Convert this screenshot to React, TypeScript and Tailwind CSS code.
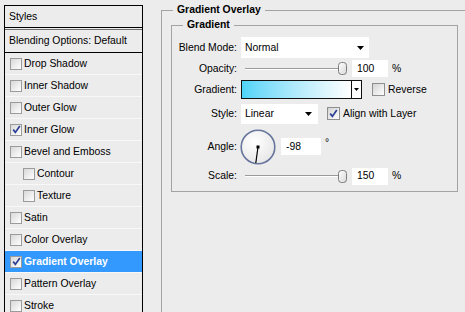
import React from "react";

type StyleItem = {
	name: string;
	checked?: boolean;
	indent?: boolean;
	active?: boolean;
};

const styleItems: StyleItem[] = [
	{ name: "Drop Shadow" },
	{ name: "Inner Shadow" },
	{ name: "Outer Glow" },
	{ name: "Inner Glow", checked: true },
	{ name: "Bevel and Emboss" },
	{ name: "Contour", indent: true },
	{ name: "Texture", indent: true },
	{ name: "Satin" },
	{ name: "Color Overlay" },
	{ name: "Gradient Overlay", checked: true, active: true },
	{ name: "Pattern Overlay" },
	{ name: "Stroke" },
];

function CheckBox({ checked = false, small = false }: { checked?: boolean; small?: boolean }) {
	return (
		<span
			className={
				small
					? "flex h-[12px] w-[12px] shrink-0 items-center justify-center border border-[#9a9b9b] bg-linear-to-br from-[#d8d8d8] to-white"
					: "flex h-[13px] w-[13px] shrink-0 items-center justify-center border border-[#8e8f8f] bg-linear-to-br from-[#d4d4d4] to-white"
			}
		>
			{checked && (
				<svg width="9" height="9" viewBox="0 0 9 9">
					<path d="M1.2 4.6 L3.4 7.4 L7.8 1" fill="none" stroke="#2c3f96" strokeWidth="1.7" />
				</svg>
			)}
		</span>
	);
}

function Arrow() {
	return (
		<svg width="7" height="4" viewBox="0 0 7 4" className="shrink-0">
			<path d="M0 0h7L3.5 4z" fill="#000" />
		</svg>
	);
}

function Slider() {
	return (
		<div className="ml-[8px] flex items-center">
			<div className="h-[2px] w-[93px] border-t border-b border-t-[#9a9a9a] border-b-white" />
			<svg width="9" height="13" viewBox="0 0 9 13">
				<defs>
					<linearGradient id="thumb" x1="0" y1="0" x2="1" y2="1">
						<stop offset="0" stopColor="#ffffff" />
						<stop offset="1" stopColor="#d8d8d8" />
					</linearGradient>
				</defs>
				<rect x="0.5" y="0.5" width="8" height="12" rx="3" fill="url(#thumb)" stroke="#7c7c7c" />
			</svg>
		</div>
	);
}

function Field({ value, width = "w-[36px]" }: { value: string; width?: string }) {
	return <div className={`${width} ml-[5px] flex h-[17px] items-center bg-white pl-[5px]`}>{value}</div>;
}

function Label({ children }: { children: React.ReactNode }) {
	return <span className="w-[65px] shrink-0 text-right">{children}</span>;
}

function Dial() {
	return (
		<svg width="36" height="36" viewBox="0 0 36 36" className="ml-[3px] shrink-0">
			<defs>
				<radialGradient id="dial" cx="0.4" cy="0.35" r="0.7">
					<stop offset="0" stopColor="#ffffff" />
					<stop offset="1" stopColor="#e6e6e6" />
				</radialGradient>
			</defs>
			<circle cx="18" cy="18" r="16.8" fill="url(#dial)" stroke="#66769c" strokeWidth="1.6" />
			<line x1="18" y1="18" x2="15.8" y2="34" stroke="#000" strokeWidth="1.2" />
			<rect x="16.5" y="16.5" width="3" height="3" fill="#000" />
		</svg>
	);
}

export default function App() {
	return (
		<div className="flex h-[312px] w-[465px] overflow-hidden bg-[#ececec] font-['Liberation_Sans',Arial,sans-serif] text-[10.4px] text-black">
			{/* Styles list */}
			<div className="ml-[4px] mt-[5px] w-[139px] shrink-0 self-start border border-black">
				<div className="flex h-[22px] items-center border-b border-black pl-[4px]">Styles</div>
				<div className="h-[2px] border-b border-[#6f6f6f]" />
				<div className="flex h-[23px] items-center border-b border-black pl-[4px]">Blending Options: Default</div>
				{styleItems.map((item) => (
					<div
						key={item.name}
						className={`flex h-[22px] items-center gap-[2px] border-b border-[#f8f8f8] ${
							item.indent ? "pl-[18px]" : "pl-[5px]"
						} ${item.active ? "bg-[#3399ff] font-bold text-white" : ""}`}
					>
						<CheckBox checked={item.checked} small />
						<span>{item.name}</span>
					</div>
				))}
			</div>

			{/* Gradient Overlay panel */}
			<fieldset className="ml-[18px] mt-[3px] h-[330px] w-[330px] shrink-0 border border-[#a3a3a3]">
				<legend className="ml-[11px] px-[4px] font-bold leading-[14px]">Gradient Overlay</legend>
				<fieldset className="ml-[9px] mt-[1px] w-[287px] border border-[#a3a3a3]">
					<legend className="ml-[11px] px-[4px] font-bold leading-[14px]">Gradient</legend>
					<div className="flex flex-col pt-[5px] pb-[3px]">
						<div className="flex h-[21px] items-center">
							<Label>Blend Mode:</Label>
							<div className="ml-[4px] flex h-[21px] w-[128px] items-center justify-between bg-white pl-[4px] pr-[5px]">
								<span>Normal</span>
								<Arrow />
							</div>
						</div>
						<div className="flex h-[21px] items-center">
							<Label>Opacity:</Label>
							<Slider />
							<Field value="100" />
							<span className="ml-[4px]">%</span>
						</div>
						<div className="flex h-[20px] items-start pt-[1px]">
							<Label>
								<span className="leading-[19px]">Gradient:</span>
							</Label>
							<div className="ml-[4px] flex h-[19px] w-[121px] border border-[#111]">
								<div className="h-full w-[109px] bg-linear-to-r from-[#4dd4f7] to-white" />
								<div className="flex flex-1 items-center justify-center border-l border-[#111] bg-white">
									<svg width="5" height="3" viewBox="0 0 5 3">
										<path d="M0 0h5L2.5 3z" fill="#000" />
									</svg>
								</div>
							</div>
							<div className="ml-[10px] flex h-[19px] items-center gap-[3px]">
								<CheckBox />
								<span>Reverse</span>
							</div>
						</div>
						<div className="flex h-[30px] items-center">
							<Label>Style:</Label>
							<div className="ml-[4px] flex h-[20px] w-[77px] items-center justify-between bg-white pl-[4px] pr-[6px]">
								<span>Linear</span>
								<Arrow />
							</div>
							<div className="ml-[9px] flex items-center gap-[3px]">
								<CheckBox checked />
								<span>Align with Layer</span>
							</div>
						</div>
						<div className="flex h-[35px] items-center">
							<Label>Angle:</Label>
							<Dial />
							<Field value="-98" width="w-[40px]" />
							<span className="ml-[4px] -mt-[8px]">°</span>
						</div>
						<div className="flex h-[24px] items-center">
							<Label>Scale:</Label>
							<Slider />
							<Field value="150" />
							<span className="ml-[4px]">%</span>
						</div>
					</div>
				</fieldset>
			</fieldset>
		</div>
	);
}
